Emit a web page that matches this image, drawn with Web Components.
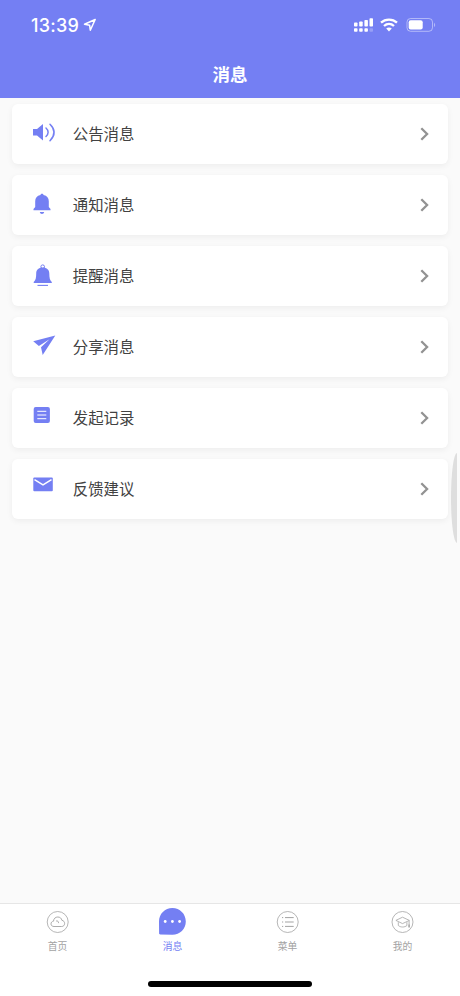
<!DOCTYPE html>
<html lang="zh-CN">
<head>
<meta charset="utf-8">
<meta name="viewport" content="width=device-width, initial-scale=1">
<title>消息</title>
<style>
    html, body{
        margin: 0;
        height: 100%;
        overflow: hidden;
    }
    body{
        --main: #747ff3;
        background: #fafafa;
        color: #424242;
        font-family: "Liberation Sans", "Noto Sans CJK SC", sans-serif;
    }
</style>
</head>
<body>
<message-page></message-page>
<script>
const icons = {
    volume: `<path d="M1 9h4l6-5v16.500l-6-5H1z" fill="currentColor"/>
        <path d="M14 8c2.800 2.500 2.800 6 0 8.500M18 4.200c5.200 5 5.200 11 0 16.500" fill="none" stroke="currentColor" stroke-width="1.500" stroke-linecap="round"/>`,
    bell: `<path d="M8.500 4c0-1.700 3-1.700 3 0 3.600.700 5.300 3 5.300 6.200v5.800l1.700 2v1.300h-17v-1.300l1.700-2v-5.800C3.200 7 4.900 4.700 8.500 4z" fill="currentColor"/>
        <path d="M7.800 21h4.400c-.3 2.500-4.100 2.500-4.400 0z" fill="currentColor"/>`,
    alarm: `<circle cx="10.700" cy="4.700" r="1.800" fill="none" stroke="currentColor" stroke-width="1"/>
        <path d="M10.700 5.500c4.200 0 6.600 2.500 6.600 6 0 4.200.5 6.700 2.500 8.500v.9H1.700V20c2-1.800 2.500-4.300 2.500-8.500 0-3.500 2.300-6 6.500-6z" fill="currentColor"/>
        <path d="M5.500 23.400h10.500" stroke="currentColor" stroke-width="1.100"/>`,
    plane: `<path d="M23.300 2.600 1.200 8.300l5.700 4.600 10.600-6.700-8.500 8 1.700 7.800z" fill="currentColor"/>`,
    note: `<rect x="1.700" y="2.900" width="16.200" height="16.200" rx="2" fill="currentColor"/>
        <path d="M5.300 7.300h9M5.300 11h9M5.300 14.700h9" stroke="#fff" stroke-width="1"/>`,
    mail: `<rect x="1.300" y="2.600" width="19.500" height="13.700" rx="1" fill="currentColor"/>
        <path d="m2.500 4.700 8.500 5.200 8.500-5.200" fill="none" stroke="#fff" stroke-width="1.500"/>`,
    cloud: `<g transform="translate(-.3)"><circle cx="14" cy="14" r="10.500" fill="none" stroke="currentColor" stroke-width=".8"/>
        <path d="M10.300 18.500c-2 0-3-1.200-3-2.600 0-1.500 1-2.600 2.500-2.700.2-2.700 2-4.200 4.300-4.200 2.100 0 3.700 1.200 4.100 3.300 1.700.3 2.700 1.500 2.700 3.200 0 1.800-1.200 3-3 3zM12.400 13c1.600-.4 2.600.5 2.400 2.100" fill="none" stroke="currentColor" stroke-width=".9"/></g>`,
    chat: `<g transform="translate(-.7)"><path d="M.7 13.500C.7 6 6.600.1 14.100.1S27.500 6 27.500 13.500 21.600 26.700 14.100 26.700L2 26.400C1.200 26.400.8 26 .8 25.200z" fill="currentColor"/>
        <g fill="#fff"><circle cx="6.900" cy="13.500" r="1.400"/><circle cx="14.100" cy="13.500" r="1.400"/><circle cx="21.300" cy="13.500" r="1.400"/></g></g>`,
    menu: `<g transform="translate(-.3)"><circle cx="14" cy="14" r="10.500" fill="none" stroke="currentColor" stroke-width=".8"/>
        <path d="M8.300 9.600h1.200M8.300 14h1.200M8.300 18.400h1.200M11.300 9.600h8.700M11.300 14h8.700M11.300 18.400h8.700" stroke="currentColor" stroke-width="1"/></g>`,
    cap: `<g transform="translate(-.5)"><circle cx="14" cy="14" r="10.500" fill="none" stroke="currentColor" stroke-width=".8"/>
        <path d="m7.400 12.400 6.600-3.200 6.900 3.200-6.900 3.200zM9.800 14.200v3.300c2.300 2 6.300 2 8.600 0v-3.300M20.600 12.800v6.400" fill="none" stroke="currentColor" stroke-width=".8"/>
        <path d="M20.600 16.500v3" stroke="currentColor" stroke-width="1.300"/></g>`
}

customElements.define("ui-icon", class UiIcon extends HTMLElement{
    constructor(){
        super()
        this.attachShadow({mode: "open"})
    }
    connectedCallback(){
        this.shadowRoot.innerHTML = `
            <style>
            :host{ display: block; width: 28px; height: 28px; flex: none; }
            svg{ display: block; overflow: visible; }
            </style>
            <svg width="28" height="28" viewBox="0 0 28 28">${icons[this.getAttribute("name")]}</svg>`
    }
})

customElements.define("status-bar", class StatusBar extends HTMLElement{
    constructor(){
        super()
        this.attachShadow({mode: "open"}).innerHTML = `
            <style>
            :host{
                display: flex;
                align-items: center;
                height: 50px;
                padding: 0 24px 0 31px;
                box-sizing: border-box;
                color: #fff;
            }
            .time{
                padding-top: 2px;
                font: 500 18px/20px Inter, sans-serif;
                letter-spacing: .25px;
                width: 48px;
                white-space: nowrap;
            }
            .location{ margin-left: 4px; }
            .signal{ margin-left: auto; }
            .wifi{ margin: 0 8px 0 7px; }
            </style>
            <span class="time"><slot></slot></span>
            <svg class="location" width="14" height="14" viewBox="0 0 14 14"><path d="M12.200 1.500 1.500 6.300l5.100.9.700 5z" fill="none" stroke="#fff" stroke-width="1.500" stroke-linejoin="round"/></svg>
            <svg class="signal" width="20" height="16" viewBox="0 0 20 16">
                <g fill="#fff" transform="translate(.5)">
                    <rect x=".5" y="5.500" width="3.500" height="4" rx=".8"/><rect x="5.700" y="4.500" width="3.500" height="5" rx=".8"/>
                    <rect x="10.900" y="3" width="3.500" height="6.500" rx=".8"/><rect x="16" y="1.200" width="3.500" height="8.300" rx=".8"/>
                    <rect x=".5" y="11.300" width="3.500" height="3.500" rx=".8"/><rect x="5.700" y="11.300" width="3.500" height="3.500" rx=".8"/>
                    <rect x="10.900" y="11.300" width="3.500" height="3.500" rx=".8"/><rect x="16" y="11.300" width="3.500" height="3.500" rx=".8" opacity=".25"/>
                </g>
            </svg>
            <svg class="wifi" width="18" height="14" viewBox="0 0 18 14">
                <path d="M1 4.700c4.500-4.200 11.500-4.200 16 0M4 8c2.900-2.700 7.100-2.700 10 0" fill="none" stroke="#fff" stroke-width="2.300"/>
                <path d="M6.200 10.600c1.600-1.500 4-1.500 5.600 0L9 13.500z" fill="#fff"/>
            </svg>
            <svg width="30" height="16" viewBox="0 0 30 16">
                <rect x="1" y="1.500" width="25.500" height="12.800" rx="3.600" fill="none" stroke="#fff" stroke-opacity=".45"/>
                <rect x="2.700" y="3.200" width="14" height="9.400" rx="2" fill="#fff"/>
                <path d="M28 5.700c1.600.8 1.600 3.600 0 4.400z" fill="#fff" opacity=".45"/>
            </svg>`
    }
})

customElements.define("nav-header", class NavHeader extends HTMLElement{
    constructor(){
        super()
        this.attachShadow({mode: "open"}).innerHTML = `
            <style>
            :host{ display: block; height: 98px; flex: none; background: var(--main); }
            .title{
                height: 48px;
                color: #fff;
                text-align: center;
                font-size: 17.500px;
                font-weight: 600;
                line-height: 50px;
            }
            </style>
            <status-bar>13:39</status-bar>
            <div class="title"><slot></slot></div>`
    }
})

customElements.define("message-item", class MessageItem extends HTMLElement{
    constructor(){
        super()
        this.attachShadow({mode: "open"})
    }
    connectedCallback(){
        this.shadowRoot.innerHTML = `
            <style>
            :host{
                display: flex;
                align-items: center;
                height: 60px;
                padding: 0 17px 0 20px;
                box-sizing: border-box;
                border-radius: 6px;
                background: #fff;
                box-shadow: 0 2px 6px rgba(0, 0, 0, .055);
            }
            ui-icon{ color: var(--main); }
            .label{
                flex: 1;
                margin-left: 12.800px;
                padding-top: 2px;
                font-size: 15.400px;
                line-height: 22px;
            }
            </style>
            <ui-icon name="${this.getAttribute("icon")}"></ui-icon>
            <span class="label"><slot></slot></span>
            <svg width="12" height="16" viewBox="0 0 12 16"><path d="m2.300 2.200 5.800 5.800-5.800 5.800" fill="none" stroke="#929292" stroke-width="2.300"/></svg>`
    }
})

customElements.define("tab-item", class TabItem extends HTMLElement{
    constructor(){
        super()
        this.attachShadow({mode: "open"})
    }
    connectedCallback(){
        this.shadowRoot.innerHTML = `
            <style>
            :host{
                display: flex;
                flex: 1;
                flex-direction: column;
                align-items: center;
                color: #a3a3a3;
                font-size: 9.800px;
                line-height: 14px;
            }
            :host([active]){ color: var(--main); }
            .label{ margin-top: 4.500px; }
            </style>
            <ui-icon name="${this.getAttribute("icon")}"></ui-icon>
            <span class="label"><slot></slot></span>`
    }
})

customElements.define("tab-bar", class TabBar extends HTMLElement{
    constructor(){
        super()
        this.attachShadow({mode: "open"}).innerHTML = `
            <style>
            :host{
                display: block;
                height: 93px;
                flex: none;
                box-sizing: border-box;
                border-top: 1px solid #e6e6e6;
                background: #fff;
            }
            .tabs{ display: flex; height: 77px; padding-top: 3.500px; box-sizing: border-box; }
            .home{ width: 164px; height: 6px; margin: 0 auto; border-radius: 3px; background: #000; }
            </style>
            <div class="tabs"><slot></slot></div>
            <div class="home"></div>`
    }
})

customElements.define("message-page", class MessagePage extends HTMLElement{
    constructor(){
        super()
        this.attachShadow({mode: "open"}).innerHTML = `
            <style>
            :host{ display: flex; flex-direction: column; position: relative; height: 996px; }
            .list{
                display: flex;
                flex: 1;
                flex-direction: column;
                gap: 11.150px;
                padding: 5.600px 12px 0;
            }
            /* edge handle floating over the list */
            .handle{
                position: absolute;
                right: 3px;
                top: 453px;
                width: 6px;
                height: 90px;
                border-radius: 6px 0 0 6px / 45px 0 0 45px;
                background: #dedede;
            }
            </style>
            <nav-header>消息</nav-header>
            <div class="list">
                <message-item icon="volume">公告消息</message-item>
                <message-item icon="bell">通知消息</message-item>
                <message-item icon="alarm">提醒消息</message-item>
                <message-item icon="plane">分享消息</message-item>
                <message-item icon="note">发起记录</message-item>
                <message-item icon="mail">反馈建议</message-item>
            </div>
            <tab-bar>
                <tab-item icon="cloud">首页</tab-item>
                <tab-item icon="chat" active>消息</tab-item>
                <tab-item icon="menu">菜单</tab-item>
                <tab-item icon="cap">我的</tab-item>
            </tab-bar>
            <div class="handle"></div>`
    }
})
</script>
</body>
</html>
